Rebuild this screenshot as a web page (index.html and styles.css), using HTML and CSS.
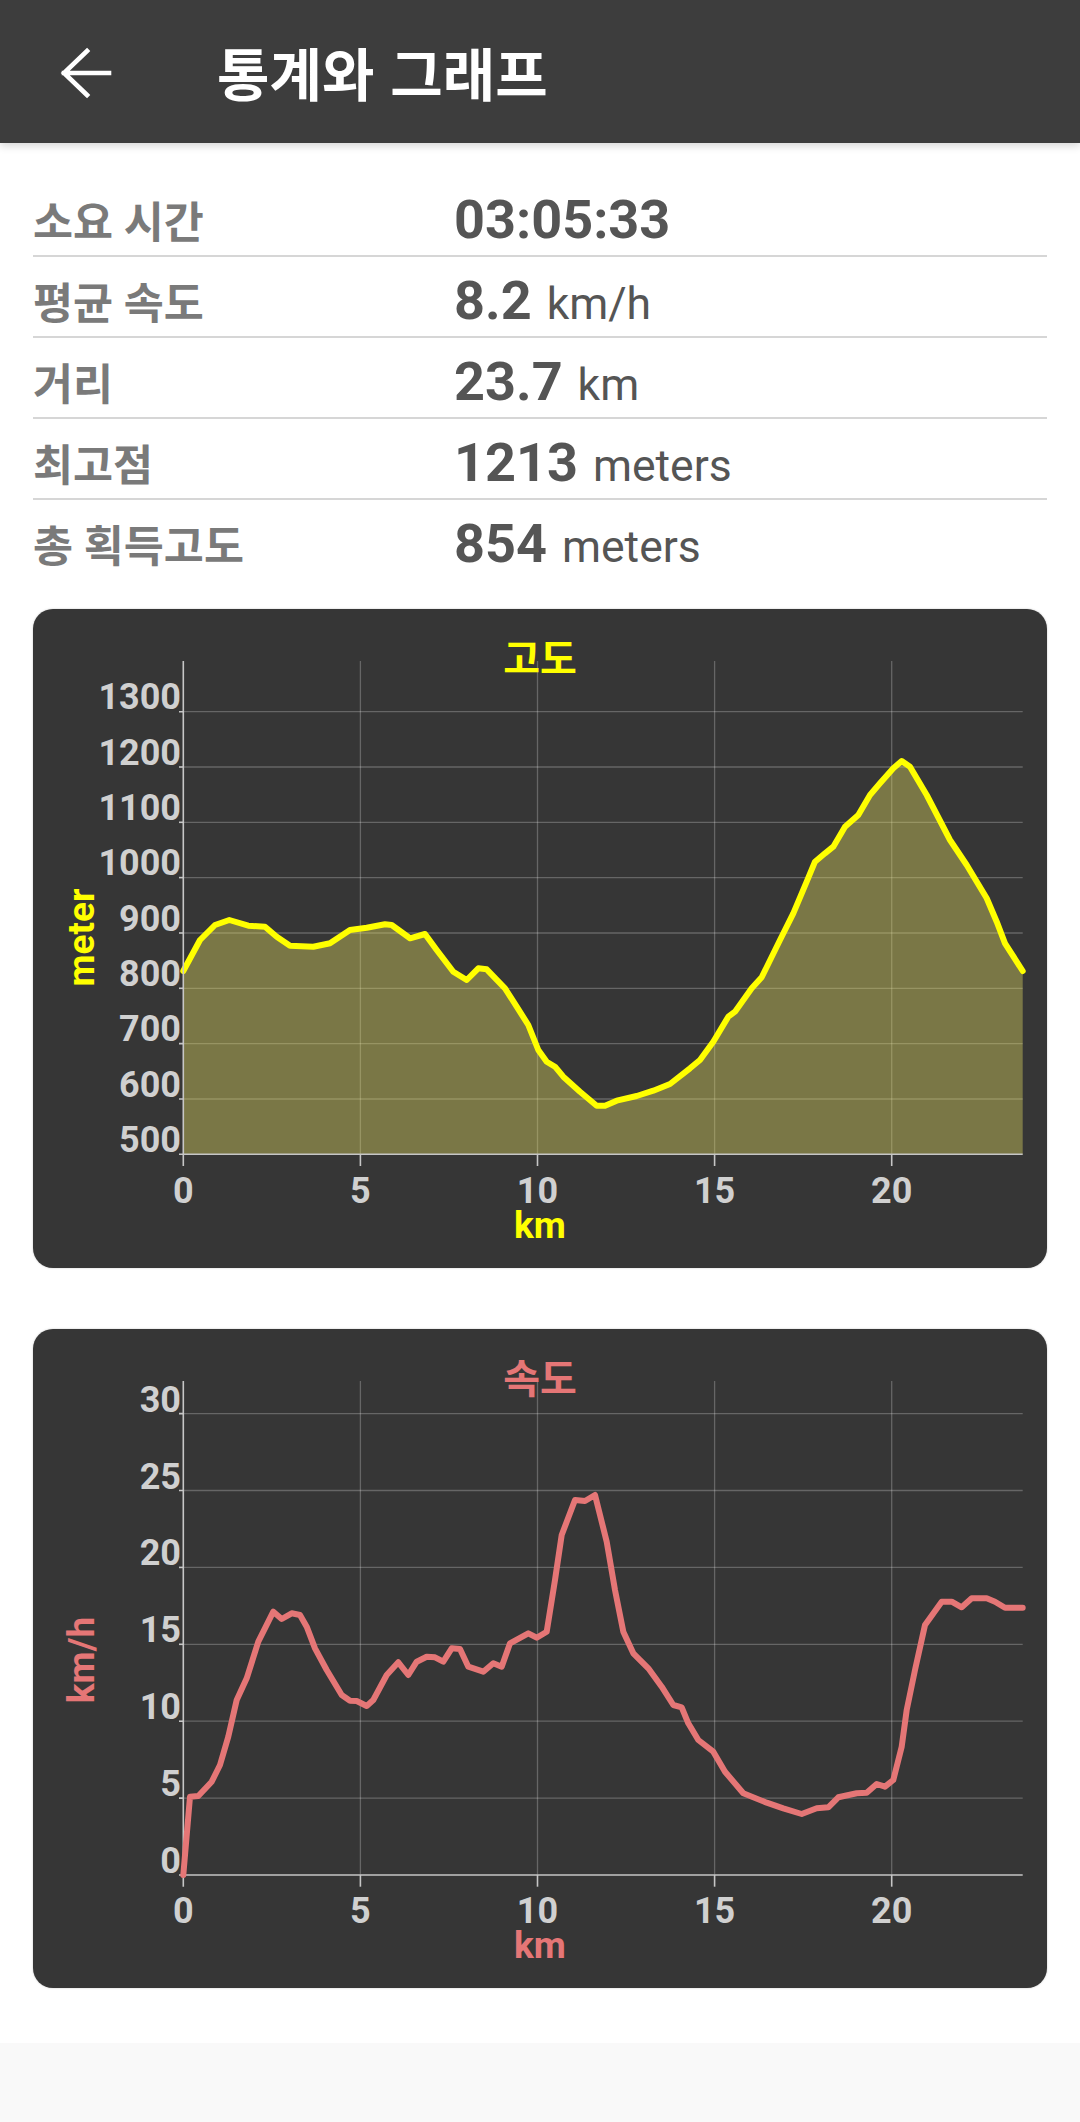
FILE: index.html
```html
<!DOCTYPE html>
<html lang="ko">
<head>
<meta charset="utf-8">
<title>통계와 그래프</title>
<link rel="stylesheet" href="styles.css">
</head>
<body>
<header class="appbar">
  <svg class="back" viewBox="0 0 48 48" aria-label="뒤로">
    <path class="back-stroke" d="M26 3 L3 25 L26 47 M3 25 H48"/>
  </svg>
  <h1 class="appbar-title">통계와 그래프</h1>
</header>

<main class="content">
  <section class="stats">
    <div class="stat-row"><span class="label">소요 시간</span><span class="value">03:05:33</span></div>
    <div class="stat-row"><span class="label">평균 속도</span><span class="value">8.2<span class="unit">km/h</span></span></div>
    <div class="stat-row"><span class="label">거리</span><span class="value">23.7<span class="unit">km</span></span></div>
    <div class="stat-row"><span class="label">최고점</span><span class="value">1213<span class="unit">meters</span></span></div>
    <div class="stat-row"><span class="label">총 획득고도</span><span class="value">854<span class="unit">meters</span></span></div>
  </section>

  <section class="chart-card">
    <svg class="chart" viewBox="0 0 1014 659" width="1014" height="659">
      <g class="grid">
        <line x1="327.4" y1="52" x2="327.4" y2="545.3"/>
        <line x1="504.5" y1="52" x2="504.5" y2="545.3"/>
        <line x1="681.6" y1="52" x2="681.6" y2="545.3"/>
        <line x1="858.7" y1="52" x2="858.7" y2="545.3"/>
        <line x1="150.3" y1="490" x2="989.7" y2="490"/>
        <line x1="150.3" y1="434.6" x2="989.7" y2="434.6"/>
        <line x1="150.3" y1="379.3" x2="989.7" y2="379.3"/>
        <line x1="150.3" y1="324" x2="989.7" y2="324"/>
        <line x1="150.3" y1="268.6" x2="989.7" y2="268.6"/>
        <line x1="150.3" y1="213.3" x2="989.7" y2="213.3"/>
        <line x1="150.3" y1="158" x2="989.7" y2="158"/>
        <line x1="150.3" y1="102.7" x2="989.7" y2="102.7"/>
      </g>
      <path class="elev-area" d="M150.3,362 L167,331 L182,316 L196.3,311 L215.3,316.7 L232,317.7 L243.7,327.7 L257,336.7 L280.3,337.7 L297,334.3 L317,321 L333.7,318.7 L352,315.3 L358.7,316 L377,329.3 L392,325 L403.7,341 L420.3,362.7 L433.7,371 L445.3,359.3 L453.7,360.3 L472,379.3 L483.7,397.7 L495.3,416 L505.3,441 L513.7,452.7 L522,457.7 L530.3,467.7 L547,482.7 L563.7,496.7 L572,496.7 L583.7,491.7 L603.7,487 L620.3,481.7 L637,475 L657,459.3 L667,451 L680.3,432.7 L695.3,407.7 L702,402.7 L718.7,379.3 L728.7,368.3 L747,331 L760.3,304.3 L773.7,272.7 L782,252.7 L792,244.3 L800.3,237.7 L812,217.7 L825.3,206 L837,186 L847,174.3 L860.3,159.3 L868.7,152 L877,157.7 L893.7,186 L917,231 L933.7,256 L953.7,289.3 L963.7,312.7 L972,334.3 L989.7,362 L989.7,545.3 L150.3,545.3 Z"/>
      <path class="elev-line" d="M150.3,362 L167,331 L182,316 L196.3,311 L215.3,316.7 L232,317.7 L243.7,327.7 L257,336.7 L280.3,337.7 L297,334.3 L317,321 L333.7,318.7 L352,315.3 L358.7,316 L377,329.3 L392,325 L403.7,341 L420.3,362.7 L433.7,371 L445.3,359.3 L453.7,360.3 L472,379.3 L483.7,397.7 L495.3,416 L505.3,441 L513.7,452.7 L522,457.7 L530.3,467.7 L547,482.7 L563.7,496.7 L572,496.7 L583.7,491.7 L603.7,487 L620.3,481.7 L637,475 L657,459.3 L667,451 L680.3,432.7 L695.3,407.7 L702,402.7 L718.7,379.3 L728.7,368.3 L747,331 L760.3,304.3 L773.7,272.7 L782,252.7 L792,244.3 L800.3,237.7 L812,217.7 L825.3,206 L837,186 L847,174.3 L860.3,159.3 L868.7,152 L877,157.7 L893.7,186 L917,231 L933.7,256 L953.7,289.3 L963.7,312.7 L972,334.3 L989.7,362"/>
      <g class="axis">
        <line x1="150.3" y1="52" x2="150.3" y2="557"/>
        <line x1="146" y1="545.3" x2="989.7" y2="545.3"/>
        <line x1="327.4" y1="545.3" x2="327.4" y2="557"/>
        <line x1="504.5" y1="545.3" x2="504.5" y2="557"/>
        <line x1="681.6" y1="545.3" x2="681.6" y2="557"/>
        <line x1="858.7" y1="545.3" x2="858.7" y2="557"/>
        <line x1="146" y1="490" x2="150.3" y2="490"/>
        <line x1="146" y1="434.6" x2="150.3" y2="434.6"/>
        <line x1="146" y1="379.3" x2="150.3" y2="379.3"/>
        <line x1="146" y1="324" x2="150.3" y2="324"/>
        <line x1="146" y1="268.6" x2="150.3" y2="268.6"/>
        <line x1="146" y1="213.3" x2="150.3" y2="213.3"/>
        <line x1="146" y1="158" x2="150.3" y2="158"/>
        <line x1="146" y1="102.7" x2="150.3" y2="102.7"/>
      </g>
      <text class="chart-title elev" x="507" y="64" text-anchor="middle">고도</text>
      <g class="tick" text-anchor="end">
        <text x="148" y="542.8">500</text>
        <text x="148" y="487.5">600</text>
        <text x="148" y="432.1">700</text>
        <text x="148" y="376.8">800</text>
        <text x="148" y="321.5">900</text>
        <text x="148" y="266.1">1000</text>
        <text x="148" y="210.8">1100</text>
        <text x="148" y="155.5">1200</text>
        <text x="148" y="100.2">1300</text>
      </g>
      <g class="tick" text-anchor="middle">
        <text x="150.3" y="593.5">0</text>
        <text x="327.4" y="593.5">5</text>
        <text x="504.5" y="593.5">10</text>
        <text x="681.6" y="593.5">15</text>
        <text x="858.7" y="593.5">20</text>
      </g>
      <text class="axis-title elev" x="507" y="629" text-anchor="middle">km</text>
      <text class="axis-title elev" transform="translate(61.3 328.5) rotate(-90)" text-anchor="middle">meter</text>
    </svg>
  </section>

  <section class="chart-card">
    <svg class="chart" viewBox="0 0 1014 659" width="1014" height="659">
      <g class="grid">
        <line x1="327.4" y1="52" x2="327.4" y2="546"/>
        <line x1="504.5" y1="52" x2="504.5" y2="546"/>
        <line x1="681.6" y1="52" x2="681.6" y2="546"/>
        <line x1="858.7" y1="52" x2="858.7" y2="546"/>
        <line x1="150.3" y1="469.1" x2="989.7" y2="469.1"/>
        <line x1="150.3" y1="392.2" x2="989.7" y2="392.2"/>
        <line x1="150.3" y1="315.3" x2="989.7" y2="315.3"/>
        <line x1="150.3" y1="238.4" x2="989.7" y2="238.4"/>
        <line x1="150.3" y1="161.5" x2="989.7" y2="161.5"/>
        <line x1="150.3" y1="84.6" x2="989.7" y2="84.6"/>
      </g>
      <g class="axis">
        <line x1="150.3" y1="52" x2="150.3" y2="557.7"/>
        <line x1="146" y1="546" x2="989.7" y2="546"/>
        <line x1="327.4" y1="546" x2="327.4" y2="557.7"/>
        <line x1="504.5" y1="546" x2="504.5" y2="557.7"/>
        <line x1="681.6" y1="546" x2="681.6" y2="557.7"/>
        <line x1="858.7" y1="546" x2="858.7" y2="557.7"/>
        <line x1="146" y1="469.1" x2="150.3" y2="469.1"/>
        <line x1="146" y1="392.2" x2="150.3" y2="392.2"/>
        <line x1="146" y1="315.3" x2="150.3" y2="315.3"/>
        <line x1="146" y1="238.4" x2="150.3" y2="238.4"/>
        <line x1="146" y1="161.5" x2="150.3" y2="161.5"/>
        <line x1="146" y1="84.6" x2="150.3" y2="84.6"/>
      </g>
      <path class="speed-line" d="M150.3,546 L157,467.7 L165.3,467 L178.7,452.7 L187,436 L195.3,407.7 L203.7,371 L213.7,349.3 L225.3,312.7 L240.3,282.7 L248.7,290 L258.7,284.3 L267,286 L273.7,297.7 L282,319.3 L293.7,341 L308.7,366 L317,371.7 L323.7,372 L333.7,377 L340.3,371 L353.7,346 L365.3,333.3 L375.3,346 L383.7,332.7 L393.7,327.7 L402,328.3 L410.3,332.7 L418.7,319.3 L427,320 L435.3,337.7 L450.3,342.7 L460.3,334.3 L468.7,337.7 L477,314.3 L495.3,304.3 L503.7,308.7 L513.7,302.7 L522,251 L528.7,206 L542,171 L552,172 L562,166 L573.7,212.7 L582,261 L590.3,302.7 L600.3,324.3 L615.3,339.3 L628.7,357.7 L640.3,376 L648.7,378.3 L655.3,394.3 L665.3,411 L680.3,422.7 L692,442.7 L710.3,464.3 L733.7,473.7 L750.3,479.3 L768.7,485 L783.7,479.3 L795.3,478.3 L805.3,468.3 L823.7,464.3 L833.7,463.7 L843.7,455 L852,457.7 L860.3,451 L868.7,417.7 L873.7,381 L882,341 L892,296 L908.7,272.7 L918.7,272.7 L928.7,278.3 L938.7,269.3 L953.7,269.3 L962,272.7 L972,278.7 L989.7,278.7"/>
      <text class="chart-title speed" x="507" y="64" text-anchor="middle">속도</text>
      <g class="tick" text-anchor="end">
        <text x="148" y="544">0</text>
        <text x="148" y="467.1">5</text>
        <text x="148" y="390.2">10</text>
        <text x="148" y="313.3">15</text>
        <text x="148" y="236.4">20</text>
        <text x="148" y="159.5">25</text>
        <text x="148" y="82.6">30</text>
      </g>
      <g class="tick" text-anchor="middle">
        <text x="150.3" y="593.5">0</text>
        <text x="327.4" y="593.5">5</text>
        <text x="504.5" y="593.5">10</text>
        <text x="681.6" y="593.5">15</text>
        <text x="858.7" y="593.5">20</text>
      </g>
      <text class="axis-title speed" x="507" y="629" text-anchor="middle">km</text>
      <text class="axis-title speed" transform="translate(61.3 331) rotate(-90)" text-anchor="middle">km/h</text>
    </svg>
  </section>
</main>
<footer class="bottom-space"></footer>
</body>
</html>
```

FILE: styles.css
```css
html, body {
  margin: 0;
  padding: 0;
}

body {
  background: #ffffff;
  font-family: Roboto, "Noto Sans CJK KR", sans-serif;
}

.appbar {
  position: relative;
  z-index: 1;
  height: 143px;
  background: #3d3d3d;
  display: flex;
  align-items: center;
  box-shadow: 0 3px 8px rgba(0, 0, 0, 0.16);
}

.back {
  flex: none;
  width: 48px;
  height: 48px;
  margin-left: 61px;
  overflow: visible;
}

.back-stroke {
  fill: none;
  stroke: #ffffff;
  stroke-width: 4.6;
  stroke-linecap: square;
  stroke-linejoin: miter;
}

.appbar-title {
  margin: 0 0 0 108px;
  font-family: "Noto Sans CJK KR", sans-serif;
  font-size: 57px;
  font-weight: 700;
  color: #ffffff;
  line-height: 1.2;
}

.content {
  display: flex;
  flex-direction: column;
  padding-bottom: 55px;
}

.stats {
  padding: 33px 33px 0;
  display: flex;
  flex-direction: column;
}

.stat-row {
  box-sizing: border-box;
  height: 81px;
  padding-top: 17px;
  display: flex;
  align-items: baseline;
  border-bottom: 2px solid #d6d6d6;
}

.stat-row:last-child {
  border-bottom: none;
}

.label {
  flex: none;
  width: 421px;
  font-family: Roboto, "Noto Sans CJK KR", sans-serif;
  font-size: 43.5px;
  font-weight: 700;
  color: #7a7a7a;
  line-height: 53px;
}

.value {
  font-family: Roboto, sans-serif;
  font-size: 54px;
  font-weight: 700;
  color: #555555;
  line-height: 53px;
}

.unit {
  margin-left: 15px;
  font-size: 44.5px;
  font-weight: 400;
}

.chart-card {
  margin: 28px 33px 0;
  height: 659px;
  background: #363636;
  border-radius: 20px;
  overflow: hidden;
  box-shadow: 0 0 2px rgba(0, 0, 0, 0.25);
}

.chart-card + .chart-card {
  margin-top: 61px;
}

.chart {
  display: block;
  width: 1014px;
  height: 659px;
}

.grid line {
  stroke: rgba(255, 255, 255, 0.24);
  stroke-width: 1.3;
}

.axis line {
  stroke: #c6c6c6;
  stroke-width: 1.6;
}

.elev-area {
  fill: rgba(226, 218, 96, 0.4);
}

.elev-line {
  fill: none;
  stroke: #ffff00;
  stroke-width: 6;
  stroke-linejoin: round;
  stroke-linecap: round;
}

.speed-line {
  fill: none;
  stroke: #e57676;
  stroke-width: 6;
  stroke-linejoin: round;
  stroke-linecap: round;
}

.tick {
  font-family: Roboto, sans-serif;
  font-size: 36px;
  font-weight: 700;
  fill: #d0d0d0;
}

.chart-title {
  font-family: "Noto Sans CJK KR", sans-serif;
  font-size: 40px;
  font-weight: 700;
}

.axis-title {
  font-family: Roboto, sans-serif;
  font-size: 37px;
  font-weight: 700;
}

.elev {
  fill: #ffff00;
}

.speed {
  fill: #e57676;
}

.bottom-space {
  height: 79px;
  background: #f9f9f9;
}
```
